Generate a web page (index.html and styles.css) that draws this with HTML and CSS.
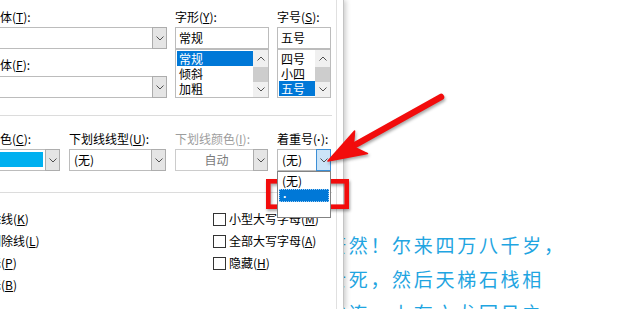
FILE: index.html
```html
<!DOCTYPE html>
<html lang="zh-CN">
<head>
    <meta charset="UTF-8">
    <meta name="viewport" content="width=device-width, initial-scale=1.0">
    <title>字体</title>
    <link rel="stylesheet" href="styles.css">
</head>
<body>
    <section class="screen">
        <div class="doc">
            <p>茫然！尔来四万八千岁，</p>
            <p>士死，然后天梯石栈相</p>
            <p>钩连。上有六龙回日之</p>
        </div>

        <div class="dialog">
            <div class="panel">
                <div class="content">
                    <div class="fonts">
                        <div class="col">
                            <label class="lbl">中文字体(<u>T</u>):</label>
                            <div class="combo">
                                <span class="val"></span>
                                <span class="btn"><svg width="8" height="5" viewBox="0 0 8 5"><polyline points="0.5,0.5 4,4 7.5,0.5" /></svg></span>
                            </div>
                            <label class="lbl lbl_second">西文字体(<u>F</u>):</label>
                            <div class="combo">
                                <span class="val"></span>
                                <span class="btn"><svg width="8" height="5" viewBox="0 0 8 5"><polyline points="0.5,0.5 4,4 7.5,0.5" /></svg></span>
                            </div>
                        </div>
                        <div class="col">
                            <label class="lbl">字形(<u>Y</u>):</label>
                            <div class="textbox">常规</div>
                            <div class="listbox">
                                <ul class="items">
                                    <li class="sel">常规</li>
                                    <li>倾斜</li>
                                    <li>加粗</li>
                                </ul>
                                <div class="scroll">
                                    <span class="arrow up"><svg width="8" height="5" viewBox="0 0 8 5"><polyline points="0.5,4.5 4,1 7.5,4.5" /></svg></span>
                                    <span class="thumb"></span>
                                    <span class="arrow"><svg width="8" height="5" viewBox="0 0 8 5"><polyline points="0.5,0.5 4,4 7.5,0.5" /></svg></span>
                                </div>
                            </div>
                        </div>
                        <div class="col">
                            <label class="lbl">字号(<u>S</u>):</label>
                            <div class="textbox">五号</div>
                            <div class="listbox">
                                <ul class="items">
                                    <li>四号</li>
                                    <li>小四</li>
                                    <li class="sel">五号</li>
                                </ul>
                                <div class="scroll">
                                    <span class="arrow up"><svg width="8" height="5" viewBox="0 0 8 5"><polyline points="0.5,4.5 4,1 7.5,4.5" /></svg></span>
                                    <span class="thumb"></span>
                                    <span class="arrow"><svg width="8" height="5" viewBox="0 0 8 5"><polyline points="0.5,0.5 4,4 7.5,0.5" /></svg></span>
                                </div>
                            </div>
                        </div>
                    </div>

                    <hr class="sep sep_top">

                    <div class="under">
                        <div class="col">
                            <label class="lbl">字体颜色(<u>C</u>):</label>
                            <div class="combo">
                                <span class="swatch"></span>
                                <span class="btn"><svg width="8" height="5" viewBox="0 0 8 5"><polyline points="0.5,0.5 4,4 7.5,0.5" /></svg></span>
                            </div>
                        </div>
                        <div class="col">
                            <label class="lbl">下划线线型(<u>U</u>):</label>
                            <div class="combo">
                                <span class="val">(无)</span>
                                <span class="btn"><svg width="8" height="5" viewBox="0 0 8 5"><polyline points="0.5,0.5 4,4 7.5,0.5" /></svg></span>
                            </div>
                        </div>
                        <div class="col">
                            <label class="lbl disabled">下划线颜色(<u>I</u>):</label>
                            <div class="combo combo_disabled">
                                <span class="val center">自动</span>
                                <span class="btn"><svg width="8" height="5" viewBox="0 0 8 5"><polyline points="0.5,0.5 4,4 7.5,0.5" /></svg></span>
                            </div>
                        </div>
                        <div class="col">
                            <label class="lbl">着重号(<span class="latin">·</span>):</label>
                            <div class="combo combo_open">
                                <span class="val">(无)</span>
                                <span class="btn btn_active"><svg width="8" height="5" viewBox="0 0 8 5"><polyline points="0.5,0.5 4,4 7.5,0.5" /></svg></span>
                                <ul class="droplist">
                                    <li>(无)</li>
                                    <li class="sel focus"><span class="latin">·</span></li>
                                </ul>
                            </div>
                        </div>
                    </div>

                    <hr class="sep sep_bottom">

                    <div class="effects">
                        <div class="checks">
                            <div class="check"><span class="box"></span>删除线(<u>K</u>)</div>
                            <div class="check"><span class="box"></span>双删除线(<u>L</u>)</div>
                            <div class="check"><span class="box"></span>上标(<u>P</u>)</div>
                            <div class="check"><span class="box"></span>下标(<u>B</u>)</div>
                        </div>
                        <div class="checks">
                            <div class="check"><span class="box"></span>小型大写字母(<u>M</u>)</div>
                            <div class="check"><span class="box"></span>全部大写字母(<u>A</u>)</div>
                            <div class="check"><span class="box"></span>隐藏(<u>H</u>)</div>
                        </div>
                    </div>
                </div>
            </div>
        </div>

        <!-- annotation drawn over the screenshot -->
        <svg class="marks" width="620" height="309" viewBox="0 0 620 309">
            <rect x="268.3" y="181.3" width="78.4" height="25.4" class="mark_box" />
            <line x1="355" y1="145" x2="441" y2="97" class="mark_shaft" />
            <polygon points="328,161 354.6,131 353.2,146.7 367.5,153.6" class="mark_head" />
        </svg>
    </section>
</body>
</html>
```

FILE: styles.css
```css
* {
    margin: 0;
    padding: 0;
    box-sizing: border-box;
}
body {
    width: 620px;
    height: 309px;
    overflow: hidden;
    background: #fff;
    font-family: "Noto Sans CJK SC", "Noto Sans", sans-serif;
}
.screen {
    position: relative;
    width: 620px;
    height: 309px;
    overflow: hidden;
    background: #fff;
}
.doc {
    padding: 228px 0 0 327px;
    color: #1fa5e1;
    font-size: 19px;
    line-height: 34px;
    letter-spacing: 2.7px;
    white-space: nowrap;
}
.dialog {
    position: absolute;
    left: 0;
    top: 0;
    width: 344px;
    height: 309px;
    background: #fff;
    border-right: 1px solid #c4c4c4;
    box-shadow: 2px 0 5px rgba(0, 0, 0, 0.2);
}
.panel {
    width: 337px;
    height: 100%;
    border-right: 1px solid #e0e0e0;
    overflow: hidden;
}
.content {
    margin-left: -36px;
    width: 368px;
    padding-top: 9px;
    font-size: 12px;
    line-height: 16px;
    color: #000;
}
.latin {
    font-family: "Liberation Sans", sans-serif;
    font-weight: bold;
}
.lbl {
    display: block;
    height: 16px;
    margin-bottom: 2px;
    white-space: nowrap;
}
.lbl_second {
    margin-top: 8px;
    margin-bottom: 3px;
}
.disabled {
    color: #9d9d9d;
}
u {
    text-underline-offset: 1px;
}
.fonts {
    display: grid;
    grid-template-columns: 203px 94px 54px;
    column-gap: 8px;
}
.combo {
    position: relative;
    display: flex;
    height: 22px;
    border: 1px solid #bcbcbc;
    background: #fff;
}
.combo .val {
    flex: 1;
    padding-left: 4px;
    line-height: 20px;
    white-space: nowrap;
}
.combo .center {
    text-align: center;
    color: #7a7a7a;
}
.combo .btn {
    width: 15px;
    margin: -1px -1px -1px 0;
    border: 1px solid #adadad;
    background: #e5e5e5;
    display: flex;
    align-items: center;
    justify-content: center;
}
.combo .btn_active {
    background: #cce4f7;
    border-color: #3c8fd6;
}
.combo svg polyline,
.scroll svg polyline {
    fill: none;
    stroke: #505050;
    stroke-width: 1;
}
.combo_disabled {
    border-color: #cccccc;
}
.swatch {
    flex: 1;
    margin: 2px 2px 3px 2px;
    background: #00b0f0;
}
.textbox {
    height: 22px;
    border: 1px solid #bcbcbc;
    padding-left: 3px;
    line-height: 20px;
}
.listbox {
    display: flex;
    height: 49px;
    border: 1px solid #bcbcbc;
    background: #fff;
}
.items {
    flex: 1;
    list-style: none;
    padding: 1px 0 0 1px;
}
.items li {
    height: 15px;
    line-height: 15px;
    padding-left: 2px;
}
.sel {
    background: #0078d7;
    color: #fff;
}
.scroll {
    width: 15px;
    display: flex;
    flex-direction: column;
    background: #f0f0f0;
}
.scroll .arrow {
    height: 15px;
    display: flex;
    align-items: center;
    justify-content: center;
}
.scroll .up {
    height: 17px;
}
.scroll .thumb {
    height: 15px;
    background: #cdcdcd;
}
.sep {
    border: 0;
    height: 1px;
    width: 368px;
    background: #dcdcdc;
}
.sep_top {
    margin: 17px 0 15px;
}
.sep_bottom {
    margin: 21px 0 15px;
}
.under {
    display: grid;
    grid-template-columns: 96px 97px 93px 54px;
    column-gap: 9px;
}
.droplist {
    position: absolute;
    left: -1px;
    top: calc(100% + 1px);
    width: 54px;
    height: 47px;
    border: 1px solid #838383;
    background: #fff;
    list-style: none;
    padding: 0 1px;
    z-index: 2;
}
.droplist li {
    height: 17px;
    line-height: 17px;
    padding-left: 3px;
}
.droplist .sel {
    height: 13px;
    line-height: 11px;
    border: 1px dotted #9fcdf3;
}
.effects {
    display: grid;
    grid-template-columns: 252px auto;
    margin-left: -3px;
}
.check {
    display: flex;
    align-items: center;
    height: 22px;
    white-space: nowrap;
}
.box {
    width: 13px;
    height: 13px;
    border: 1px solid #333;
    background: #fff;
    margin-right: 3px;
}
.marks {
    position: absolute;
    left: 0;
    top: 0;
    pointer-events: none;
    filter: drop-shadow(1px 2px 1.5px rgba(0, 0, 0, 0.35));
}
.mark_box {
    fill: none;
    stroke: #f20c0c;
    stroke-width: 4.6;
}
.mark_shaft {
    stroke: #f20c0c;
    stroke-width: 6.5;
    stroke-linecap: round;
}
.mark_head {
    fill: #f20c0c;
    stroke: #f20c0c;
    stroke-width: 1.5;
    stroke-linejoin: round;
}
```
